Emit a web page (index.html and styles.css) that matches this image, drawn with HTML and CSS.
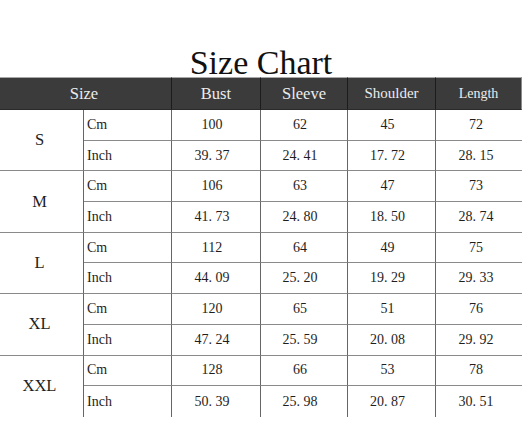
FILE: index.html
```html
<!DOCTYPE html>
<html>
<head>
<meta charset="utf-8">
<link rel="stylesheet" href="styles.css">
</head>
<body>
<div class="page">
  <h1 class="title">Size Chart</h1>
  <div class="chart">
    <div class="hd hd-size">Size</div>
    <div class="hd">Bust</div>
    <div class="hd">Sleeve</div>
    <div class="hd hd-sm">Shoulder</div>
    <div class="hd hd-xs hd-last">Length</div>

    <div class="sz">S</div>
    <div class="unit">Cm</div><div class="num">100</div><div class="num">62</div><div class="num">45</div><div class="num last">72</div>
    <div class="unit">Inch</div><div class="num">39. 37</div><div class="num">24. 41</div><div class="num">17. 72</div><div class="num last">28. 15</div>

    <div class="sz">M</div>
    <div class="unit">Cm</div><div class="num">106</div><div class="num">63</div><div class="num">47</div><div class="num last">73</div>
    <div class="unit">Inch</div><div class="num">41. 73</div><div class="num">24. 80</div><div class="num">18. 50</div><div class="num last">28. 74</div>

    <div class="sz">L</div>
    <div class="unit">Cm</div><div class="num">112</div><div class="num">64</div><div class="num">49</div><div class="num last">75</div>
    <div class="unit">Inch</div><div class="num">44. 09</div><div class="num">25. 20</div><div class="num">19. 29</div><div class="num last">29. 33</div>

    <div class="sz">XL</div>
    <div class="unit">Cm</div><div class="num">120</div><div class="num">65</div><div class="num">51</div><div class="num last">76</div>
    <div class="unit">Inch</div><div class="num">47. 24</div><div class="num">25. 59</div><div class="num">20. 08</div><div class="num last">29. 92</div>

    <div class="sz end">XXL</div>
    <div class="unit">Cm</div><div class="num">128</div><div class="num">66</div><div class="num">53</div><div class="num last">78</div>
    <div class="unit end">Inch</div><div class="num end">50. 39</div><div class="num end">25. 98</div><div class="num end">20. 87</div><div class="num last end">30. 51</div>
  </div>
</div>
</body>
</html>
```

FILE: styles.css
```css
html, body {
  margin: 0;
  padding: 0;
  background: #ffffff;
}

.page {
  width: 523px;
  font-family: "Liberation Serif", "Times New Roman", serif;
  color: #1e1e1e;
}

.title {
  margin: 0;
  padding-top: 49px;
  width: 522px;
  text-align: center;
  font-size: 34px;
  line-height: 28px;
  font-weight: normal;
  color: #111;
}

.chart {
  display: grid;
  grid-template-columns: 84px 88px 89px 87px 88px 86px;
  grid-template-rows: 33px repeat(10, 30.7px);
  width: 522px;
}

.chart > div {
  box-sizing: border-box;
  display: flex;
  align-items: center;
}

.hd {
  background: #3b3b3b;
  color: #ececec;
  border-top: 1px solid #a8a8a8;
  border-bottom: 1px solid #2a2a2a;
  border-right: 1px solid #1c1c1c;
  justify-content: center;
  font-size: 16.5px;
}

.hd-size {
  grid-column: span 2;
  padding-right: 3px;
}

.hd-sm {
  font-size: 15px;
}

.hd-xs {
  font-size: 14px;
}

.hd-last {
  border-right: 1px solid #8a8a8a;
}

.sz {
  grid-row: span 2;
  justify-content: center;
  padding-right: 4px;
  font-size: 16.5px;
  border-right: 1px solid #666;
  border-bottom: 1px solid #8a8a8a;
}

.unit {
  padding-left: 3px;
  font-size: 14px;
  border-right: 1px solid #666;
  border-bottom: 1px solid #8a8a8a;
}

.num {
  justify-content: center;
  padding-right: 8px;
  font-size: 14px;
  border-right: 1px solid #666;
  border-bottom: 1px solid #8a8a8a;
}

.num.last {
  padding-right: 6px;
  border-right: none;
}

.chart > .end {
  border-bottom: none;
}
```
